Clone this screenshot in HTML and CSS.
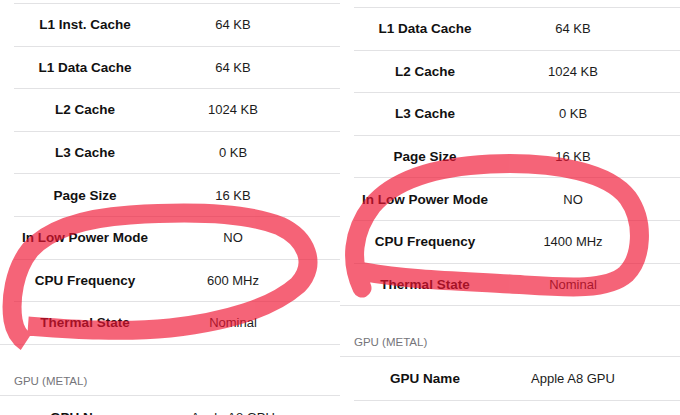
FILE: index.html
```html
<!DOCTYPE html>
<html lang="en">
<head>
    <meta charset="UTF-8">
    <title>Device Info</title>
    <link rel="stylesheet" href="styles.css">
</head>
<body>
    <div id="sheet">
        <div class="panel panel-left">
            <ul class="group">
                <li class="row"><span class="label">L1 Inst. Cache</span><span class="value">64 KB</span></li>
                <li class="row"><span class="label">L1 Data Cache</span><span class="value">64 KB</span></li>
                <li class="row"><span class="label">L2 Cache</span><span class="value">1024 KB</span></li>
                <li class="row"><span class="label">L3 Cache</span><span class="value">0 KB</span></li>
                <li class="row"><span class="label">Page Size</span><span class="value">16 KB</span></li>
                <li class="row"><span class="label">In Low Power Mode</span><span class="value">NO</span></li>
                <li class="row"><span class="label">CPU Frequency</span><span class="value">600 MHz</span></li>
                <li class="row"><span class="label">Thermal State</span><span class="value">Nominal</span></li>
            </ul>
            <div class="section-head">GPU (METAL)</div>
            <ul class="group group-gpu">
                <li class="row"><span class="label">GPU Name</span><span class="value">Apple A8 GPU</span></li>
            </ul>
        </div>
        <div class="panel panel-right">
            <ul class="group">
                <li class="row"><span class="label">L1 Data Cache</span><span class="value">64 KB</span></li>
                <li class="row"><span class="label">L2 Cache</span><span class="value">1024 KB</span></li>
                <li class="row"><span class="label">L3 Cache</span><span class="value">0 KB</span></li>
                <li class="row"><span class="label">Page Size</span><span class="value">16 KB</span></li>
                <li class="row"><span class="label">In Low Power Mode</span><span class="value">NO</span></li>
                <li class="row"><span class="label">CPU Frequency</span><span class="value">1400 MHz</span></li>
                <li class="row"><span class="label">Thermal State</span><span class="value">Nominal</span></li>
            </ul>
            <div class="section-head">GPU (METAL)</div>
            <ul class="group group-gpu">
                <li class="row"><span class="label">GPU Name</span><span class="value">Apple A8 GPU</span></li>
                <li class="row"><span class="label">Device ID</span><span class="value">0x1F</span></li>
            </ul>
        </div>

        <!-- marker circles drawn over the two screenshots -->
        <svg class="marker" width="680" height="415" viewBox="0 0 680 415">
            <g opacity="0.66" fill="none" stroke="rgb(240,20,50)" stroke-width="19" stroke-linejoin="round">
                <path d="M28 326 C70 329 120 333 170 328 C225 322 272 308 298 285 C318 264 306 238 280 226 C245 212 190 211 130 215 C85 218 50 228 30 250 C14 270 10 300 13 320 C15 332 20 338 26 342" stroke-linecap="butt"/>
                <path d="M362 288 C350 262 352 232 372 206 C392 182 430 167 490 164 C560 161 610 174 628 198 C645 222 642 258 626 274 C606 292 560 287 510 284 C460 281 410 280 365 272" stroke-linecap="round"/>
            </g>
        </svg>
    </div>
</body>
</html>
```
FILE: styles.css
```css
*{
    margin: 0;
    padding: 0;
}
ul{
    list-style: none;
}
body{
    background: #fff;
    font-family: "Liberation Sans", Arial, sans-serif;
    color: #000;
}
#sheet{
    width: 680px;
    height: 415px;
    display: flex;
    overflow: hidden;
    position: relative;
}
.panel{
    width: 340px;
}
.panel-left{
    padding-top: 3px;
}
.panel-right{
    padding-top: 7px;
}
.group{
    border-bottom: 1px solid #e2e2e4;
}
.group-gpu{
    border-bottom: none;
}
.row{
    height: 42.6px;
    box-sizing: border-box;
    margin-left: 14px;
    border-top: 1px solid #e2e2e4;
    display: grid;
    grid-template-columns: 142px 154px;
    align-items: center;
    font-size: 13px;
}
.group-gpu .row:first-child{
    border-top: none;
}
.label{
    font-size: 13.5px;
    font-weight: bold;
    text-align: center;
    color: #111;
}
.value{
    text-align: center;
    color: #1c1c1c;
}
.section-head{
    height: 51px;
    box-sizing: border-box;
    padding: 0 0 7px 14px;
    display: flex;
    align-items: flex-end;
    font-size: 11.5px;
    line-height: 14px;
    color: #75757a;
    border-bottom: 1px solid #e2e2e4;
}
.marker{
    position: absolute;
    left: 0;
    top: 0;
    pointer-events: none;
}
```
